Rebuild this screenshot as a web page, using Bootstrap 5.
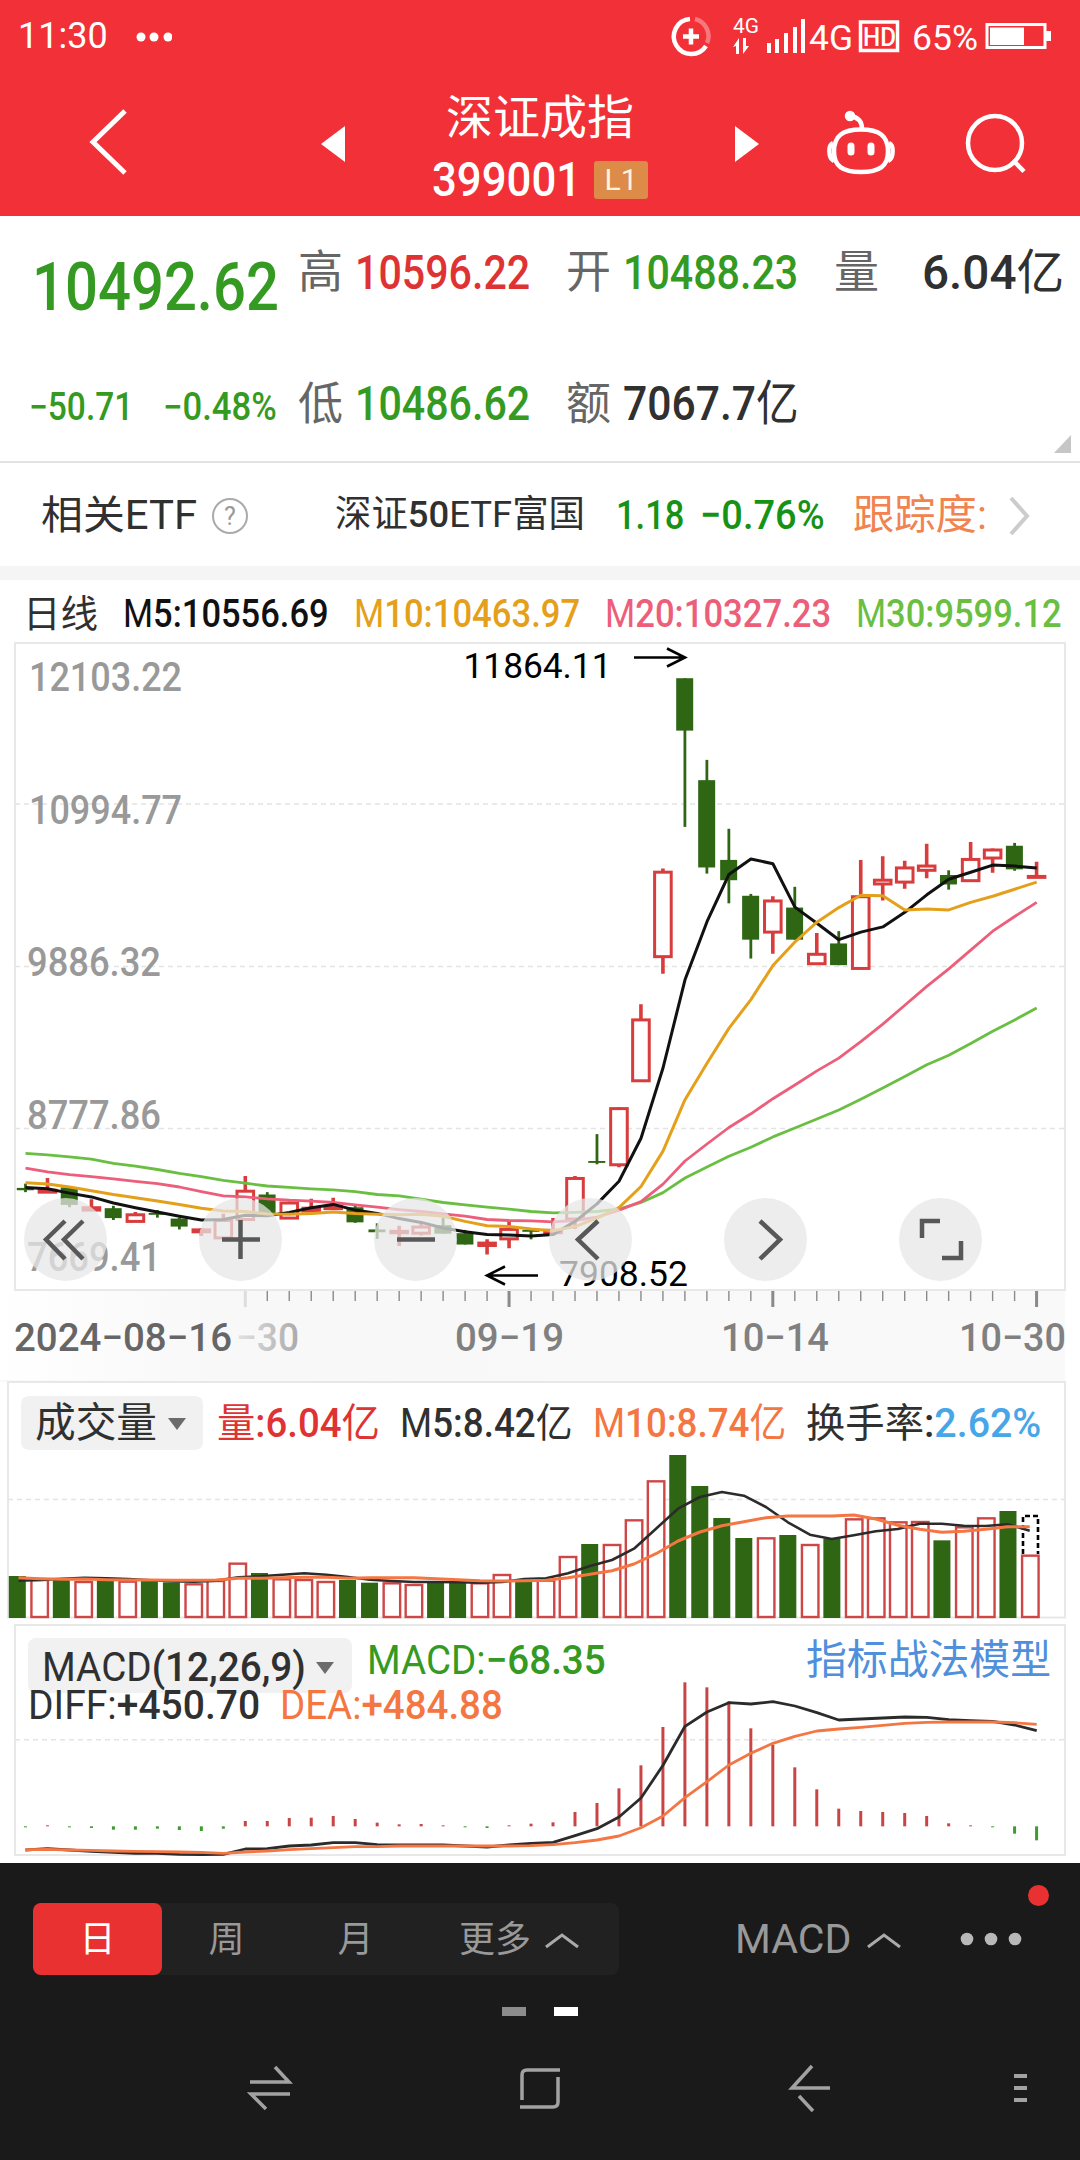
<!DOCTYPE html>
<html lang="zh-CN">
<head>
<meta charset="utf-8">
<meta name="viewport" content="width=1080">
<title>深证成指 399001</title>
<link href="https://cdn.jsdelivr.net/npm/bootstrap@5.3.0/dist/css/bootstrap.min.css" rel="stylesheet">
<style>
body{width:1080px;height:2160px;margin:0;overflow:hidden;background:#fff;color:#303030;font-family:Roboto,"Noto Sans CJK SC",sans-serif;line-height:1;font-size:41px}
svg{display:block}
.fit{display:block;flex:none;white-space:nowrap;line-height:1.2}
.fit>span{display:inline-block;transform-origin:0 50%;white-space:nowrap}
.dn{font-weight:500}
.gr{color:#349a22}.rd{color:#df3333}.lbl{color:#666}
.app-head{background:#f13037;height:216px;color:#fff}
.status{height:72px;padding:2px 29px 0 18px;font-size:36px}
.head-row{height:144px;display:grid;grid-template-columns:80px 230px 124px 290px 102px 138px 116px}
.head-row>*{align-self:start}
.title-zh{font-size:47px;line-height:46px;margin-top:23px;padding-left:12px}
.code-row{margin-top:17px;margin-left:-2px}
.lv{width:54px;height:38px;background:#dd8b48;border-radius:3px;font-size:30px;line-height:38px;color:#fff3df;margin-left:13px}
.quote{height:247px;border-bottom:2px solid #e2e2e2}
.q-row{display:grid;align-items:center;height:110px;font-size:48px;grid-template-columns:266px 57px 211px 57px 211px 88px 1fr;padding:2px 0 0 32px}
.q-row+.q-row{margin-top:22px}
.q-row .lbl{font-size:45px}
.big{font-size:66px;padding-top:30px}
.chg{font-size:38px;padding-top:8px;gap:30px;margin-left:-3px}
.corner{right:9px;bottom:8px}
.etf{height:103px;display:grid;align-items:center;grid-template-columns:170px 124px 281px 84px 153px 155px 1fr;padding:2px 0 0 41px}
.band{height:14px;background:#f5f5f5}
.ma{height:62px;padding:8px 18px 0 23px;font-size:38px}
.k-wrap{height:738px}
.k-tools{top:556px;left:24px;width:958px}
.k-btn{width:83px;height:83px;border:0;padding:0;border-radius:50%;background:rgba(231,231,231,.74)}
.k-btn svg{fill:none;stroke:#585858;stroke-width:4.500}
.sub{height:242px}
.sub2{height:241px}
.pill{background:#f1f1f1;border-radius:8px;height:54px}
.vol-head{top:15px;left:21px;right:0;height:56px;font-size:40px;display:grid;align-items:center;grid-template-columns:196px 183px 193px 213px 1fr}
.vol-head>.fit{padding-top:2px}
.macd-head{top:16px;left:28px;right:29px;font-size:40px}
.macd-head .fit{line-height:.9}
.tri{width:0;height:0;border:9px solid transparent;border-top:12px solid #6b6b6b;border-bottom:0}
.foot{height:297px;background:#1a1a1a;color:#999}
.tabs{height:72px;width:586px;background:#212121;border-radius:8px;margin:40px 0 0 33px;font-size:36px}
.tabs>div{width:129px;height:72px;padding-top:2px}
.tabs .on{background:#ea3132;color:#fff;border-radius:8px}
.tabs .more{width:199px;gap:13px}
.ind{margin:40px 0 0 116px;height:72px;gap:15px;font-size:40px;padding-top:2px}
.dots{margin:69px 0 0 58px}
.red-dot{width:21px;height:21px;background:#ea3132;right:31px;top:22px}
.pager{gap:28px;margin-top:32px}
.pager i{width:24px;height:9px;background:#8c8c8c}
.pager .now{background:#fff}
.soft{margin-top:46px}
svg text{font-family:Roboto,"Noto Sans CJK SC",sans-serif}
</style>
<script src="https://cdn.jsdelivr.net/npm/bootstrap@5.3.0/dist/js/bootstrap.bundle.min.js"></script>
</head>
<body>
<header class="app-head">
  <div class="status d-flex align-items-center justify-content-between">
    <div class="d-flex align-items-center">
      <span class="fit" data-w="90">11:30</span>
      <svg class="ms-4" width="40" height="12" fill="#fff"><circle cx="9" cy="6" r="4.5"/><circle cx="22" cy="6" r="4.5"/><circle cx="36" cy="6" r="4.5"/></svg>
    </div>
    <svg width="384" height="70" viewBox="667 2 384 70" fill="#fff">
      <g fill="none" stroke="#fff" stroke-width="4.500"><path d="M690 19A17.500 17.500 0 1 0 706 46"/><path d="M695 19A17.500 17.500 0 0 1 707 43" stroke-opacity=".35"/><path d="M683 36.500h16M691 28.500v16"/></g>
      <text x="733" y="33" font-size="20" textLength="26" lengthAdjust="spacingAndGlyphs">4G</text>
      <path d="M739 38v16h-3V46l-3 1zM743 38v16l6-8h-3v-8z"/>
      <path d="M767 43h4v10h-4zM775 39h4v14h-4zM784 33h4v20h-4zM793 27h4v26h-4zM801 19h4v34h-4z"/>
      <text x="809" y="50" font-size="35" textLength="44" lengthAdjust="spacingAndGlyphs">4G</text>
      <rect x="860.500" y="22" width="37" height="28.500" fill="none" stroke="#fff" stroke-width="3.500"/>
      <text x="863" y="45.500" font-size="26" font-weight="500" textLength="33" lengthAdjust="spacingAndGlyphs">HD</text>
      <text x="912" y="50" font-size="35" textLength="66" lengthAdjust="spacingAndGlyphs">65%</text>
      <rect x="987" y="24.500" width="58" height="23" fill="none" stroke="#fff" stroke-width="3"/><path d="M990 27.500h34v17.500h-34zM1046 31h5v10h-5z"/>
    </svg>
  </div>
  <div class="head-row">
    <span></span>
    <svg width="60" height="80" viewBox="80 100 60 80" style="margin-top:28px"><path d="M125 111L93 142L125 173" fill="none" stroke="#fff" stroke-width="5"/></svg>
    <svg width="60" height="60" viewBox="310 115 60 60" style="margin-top:43px"><path d="M345 126v36L321 144z" fill="#fff"/></svg>
    <div>
      <div class="title-zh">深证成指</div>
      <div class="code-row d-flex align-items-center">
        <span class="fit dn" data-w="149" style="font-size:49px;line-height:44px">399001</span>
        <span class="lv text-center"><span>L1</span></span>
      </div>
    </div>
    <svg width="60" height="60" viewBox="724 115 60 60" style="margin-top:43px"><path d="M735 126v36l24-18z" fill="#fff"/></svg>
    <svg width="80" height="80" viewBox="826 100 80 80" style="margin-top:28px" fill="none" stroke="#fff" stroke-width="4.500"><path d="M861 129.500c-18 0-27 6-27 22 0 15 9 20.500 27 20.500s27-5.500 27-20.500c0-16-9-22-27-22z"/><path d="M833 143c-5 2-5 15 1 18M889 143c5 2 5 15-1 18M862 129c0-8-4-12-12-13"/><circle cx="850" cy="116" r="3" fill="#fff"/><path d="M851 146v6M871 146v6" stroke-width="7" stroke-linecap="round"/></svg>
    <svg width="80" height="80" viewBox="964 100 80 80" style="margin-top:28px" fill="none" stroke="#fff" stroke-width="4.500"><circle cx="995" cy="143" r="27"/><path d="M1013 160l11 11.500"/></svg>
  </div>
</header>

<section class="quote position-relative">
  <div class="q-row">
    <span class="fit dn gr big" data-w="247">10492.62</span>
    <span class="lbl">高</span><span class="fit dn rd" data-w="175">10596.22</span>
    <span class="lbl">开</span><span class="fit dn gr" data-w="175">10488.23</span>
    <span class="lbl">量</span><span class="fit" data-w="142"><b class="dn">6.04</b>亿</span>
  </div>
  <div class="q-row">
    <div class="chg d-flex gr dn"><span class="fit" data-w="104">−50.71</span><span class="fit" data-w="114">−0.48%</span></div>
    <span class="lbl">低</span><span class="fit dn gr" data-w="175">10486.62</span>
    <span class="lbl">额</span><span class="fit" data-w="176"><b class="dn">7067.7</b>亿</span>
  </div>
  <svg class="corner position-absolute" width="17" height="18"><path d="M17 0v18H0z" fill="#c6c6c6"/></svg>
</section>

<section class="etf">
  <span class="fit" style="font-size:40px" data-w="156">相关ETF</span>
  <svg width="38" height="38"><circle cx="19" cy="19" r="17" fill="none" stroke="#aaa" stroke-width="2"/><text x="19" y="28" text-anchor="middle" font-size="25" fill="#999">?</text></svg>
  <span class="fit" style="font-size:37px" data-w="250">深证<b class="dn">50</b>ETF富国</span>
  <span class="fit dn" style="color:#169216" data-w="68">1.18</span>
  <span class="fit dn" style="color:#169216" data-w="125">−0.76%</span>
  <span class="fit" style="color:#f0834f" data-w="134">跟踪度:</span>
  <svg width="24" height="40" fill="none" stroke="#ccc" stroke-width="4"><path d="M3 2l16 18L3 38"/></svg>
</section>
<div class="band"></div>
<section class="ma d-flex align-items-center justify-content-between">
  <span class="fit" data-w="75">日线</span>
  <span class="fit" style="color:#111" data-w="206">M<b class="dn">5:10556.69</b></span>
  <span class="fit" style="color:#e4a01a" data-w="226">M<b class="dn">10:10463.97</b></span>
  <span class="fit" style="color:#ec5e79" data-w="226">M<b class="dn">20:10327.23</b></span>
  <span class="fit" style="color:#6abf43" data-w="206">M<b class="dn">30:9599.12</b></span>
</section>

<section class="k-wrap position-relative">
  <svg id="k" width="1080" height="738" viewBox="0 642 1080 738"></svg>
  <div class="k-tools position-absolute d-flex justify-content-between">
    <button class="k-btn"><svg width="83" height="83"><path d="M41 23L22 41.500L41 61M59 23L40 41.500L59 61"/></svg></button>
    <button class="k-btn"><svg width="83" height="83"><path d="M23 41.500h38M41.500 22v39"/></svg></button>
    <button class="k-btn"><svg width="83" height="83"><path d="M23 41.500h38"/></svg></button>
    <button class="k-btn"><svg width="83" height="83"><path d="M49 23L29 41.500L49 61"/></svg></button>
    <button class="k-btn"><svg width="83" height="83"><path d="M36 23L56 41.500L36 61"/></svg></button>
    <button class="k-btn"><svg width="83" height="83"><path d="M23 40V23h18M43 60h19V43"/></svg></button>
  </div>
</section>

<section class="sub position-relative">
  <svg id="v" width="1080" height="242" viewBox="0 1380 1080 242"></svg>
  <div class="vol-head position-absolute">
    <div class="pill d-flex align-items-center" style="width:182px;padding:2px 0 0 14px;gap:11px"><span class="fit" data-w="122" style="font-size:41px">成交量</span><i class="tri"></i></div>
    <span class="fit rd" data-w="163">量<b class="dn">:6.04</b>亿</span>
    <span class="fit" data-w="173">M<b class="dn">5:8.42</b>亿</span>
    <span class="fit" style="color:#f37643" data-w="193">M<b class="dn">10:8.74</b>亿</span>
    <span class="fit" data-w="235">换手率<b class="dn">:<span style="color:#47a6e8">2.62%</span></b></span>
  </div>
</section>

<section class="sub2 position-relative">
  <svg id="m" width="1080" height="241" viewBox="0 1622 1080 241"></svg>
  <div class="macd-head position-absolute">
    <div class="d-flex">
      <div class="pill d-flex align-items-center" style="width:324px;height:55px;padding:5px 0 0 14px;gap:10px"><span class="fit" data-w="264">MACD<b class="dn">(12,26,9)</b></span><i class="tri"></i></div>
      <span class="fit gr" style="margin-left:15px;margin-top:5px" data-w="239">MACD:<b class="dn">−68.35</b></span>
      <span class="fit ms-auto" style="color:#4f8fdc;font-size:41px;margin-top:4px" data-w="245">指标战法模型</span>
    </div>
    <div class="d-flex" style="gap:20px;margin-top:-5px"><span class="fit" data-w="232">DIFF:<b class="dn">+450.70</b></span><span class="fit" style="color:#f37643" data-w="223">DEA:<b class="dn">+484.88</b></span></div>
  </div>
</section>

<footer class="foot position-relative">
  <div class="d-flex align-items-start">
    <div class="tabs d-flex">
      <div class="on d-flex align-items-center justify-content-center">日</div>
      <div class="d-flex align-items-center justify-content-center">周</div>
      <div class="d-flex align-items-center justify-content-center">月</div>
      <div class="more d-flex align-items-center justify-content-center"><span>更多</span><svg width="36" height="18" fill="none" stroke="#aaa" stroke-width="3"><path d="M2 16L18 4l16 12"/></svg></div>
    </div>
    <div class="ind d-flex align-items-center"><span class="fit" data-w="116">MACD</span><svg width="36" height="18" fill="none" stroke="#aaa" stroke-width="3"><path d="M2 16L18 4l16 12"/></svg></div>
    <svg class="dots" width="64" height="14" fill="#b8b8b8"><circle cx="7" cy="7" r="6.300"/><circle cx="31" cy="7" r="6.300"/><circle cx="55" cy="7" r="6.300"/></svg>
  </div>
  <span class="red-dot rounded-circle position-absolute"></span>
  <div class="pager d-flex justify-content-center"><i></i><i class="now"></i></div>
  <svg class="soft" width="1080" height="52" viewBox="0 2062 1080 52" fill="none" stroke="#a2a2a2" stroke-width="3.500">
    <path d="M250 2082h39L275 2067M290 2094h-39l15 15"/>
    <path d="M522 2100v-25q0-5 5-5h33M558 2077v25q0 5-5 5h-33"/>
    <path d="M812 2066l-20 22h38M799 2096l14 15"/>
    <path d="M1014 2076h13M1014 2088h13M1014 2100h13" stroke-width="4"/>
  </svg>
</footer>

<script>
const RED='#d83c3c', GREEN='#2f6614', N=47;
const line=(d,x0,fy,c,w)=>`<polyline fill="none" stroke="${c}" stroke-width="${w}" stroke-linejoin="round" points="${d.map((v,i)=>(x0+22*i*.9992).toFixed(1)+','+fy(v).toFixed(1)).join(' ')}"/>`;
const txt=(s,x,y,w,size,c,wt=500)=>`<text x="${x}" y="${y}" font-size="${size}" font-weight="${wt}" fill="${c}" textLength="${w}" lengthAdjust="spacingAndGlyphs">${s}</text>`;
const dash=(x1,y)=>`<path d="M${x1} ${y}H1065" stroke="#e4e4e4" stroke-width="1.500" stroke-dasharray="5 4"/>`;

/* daily candles: direction, high, body top, body bottom, low */
const K=[['g',1152,1161,1166,1170],['r',1140,1166,1170,1170],['g',1158,1160,1197,1202],['r',1185,1203,1208,1209],['g',1199,1204,1225,1229],['r',1212,1218,1232,1233],['g',1208,1214,1218,1224],['g',1224,1226,1243,1249],['r',1246,1250,1254,1263],['r',1216,1230,1267,1268],['r',1136,1168,1228,1230],['g',1170,1175,1214,1216],['r',1190,1193,1225,1226],['r',1184,1204,1210,1211],['r',1182,1200,1205,1208],['g',1199,1202,1234,1235],['g',1236,1249,1255,1269],['r',1241,1253,1256,1284],['r',1237,1244,1257,1262],['g',1224,1240,1258,1258],['g',1250,1257,1281,1281],['r',1270,1278,1283,1302],['r',1230,1249,1269,1289],['g',1248,1250,1254,1270],['r',1225,1251,1256,1258],['r',1136,1141,1227,1248],['g',1047,1104,1108,1111],['r',990,993,1112,1117],['r',772,805,934,936],['r',484,492,671,707],['g',81,81,192,396],['g',254,297,482,495],['g',400,466,509,558],['g',538,542,635,675],['r',543,553,619,665],['g',523,567,635,635],['r',621,666,686,687],['g',617,643,689,689],['r',466,544,696,697],['r',458,509,517,552],['r',468,483,513,527],['r',432,479,488,505],['g',488,498,518,529],['r',428,465,510,512],['r',442,445,462,493],['g',430,436,486,489],['r',470,501,503,504]];
const M5=[1160,1163,1172,1180,1193,1203,1212,1221,1229,1228,1219,1220,1213,1203,1196,1208,1215,1226,1234,1246,1254,1260,1261,1263,1260,1232,1195,1147,1056,907,720,597,497,464,474,566,600,635,619,608,577,540,507,492,477,479,483];
const M10=[1150,1153,1159,1167,1175,1182,1189,1196,1204,1210,1211,1216,1217,1215,1212,1215,1217,1218,1217,1221,1232,1241,1243,1248,1252,1243,1225,1203,1158,1083,974,897,823,762,690,640,598,567,541,542,572,570,572,556,543,528,513];
const M20=[1119,1127,1133,1137,1142,1147,1152,1159,1169,1178,1180,1184,1187,1189,1192,1197,1202,1207,1211,1216,1221,1228,1230,1231,1233,1230,1223,1208,1190,1153,1104,1068,1033,1004,972,943,913,886,851,814,774,734,697,657,617,586,556];
const M30=[1088,1091,1095,1100,1109,1115,1122,1130,1137,1145,1151,1157,1160,1163,1165,1169,1175,1178,1185,1192,1197,1202,1206,1211,1214,1213,1211,1206,1192,1171,1140,1117,1094,1075,1053,1034,1015,996,973,949,925,900,880,855,829,805,780];
const ky=v=>640+v/2.119, kx=i=>25.5+21.98*i;
let s=`<defs><linearGradient id="gb"><stop offset="0" stop-color="#fff"/><stop offset=".2" stop-color="#f8f8f8"/><stop offset="1" stop-color="#f9f9f9"/></linearGradient><linearGradient id="gd" gradientUnits="userSpaceOnUse" x1="237" x2="300"><stop offset="0" stop-color="#e2e2e2"/><stop offset="1" stop-color="#a9a9a9"/></linearGradient></defs>`;
s+=`<path d="M0 1291H1065V1380H0z" fill="url(#gb)"/><rect x="15" y="643" width="1050" height="647" fill="#fff" stroke="#e8e8e8" stroke-width="2"/>`;
s+=dash(15,804)+dash(15,966.5)+dash(15,1128.5);
[['12103.22',29,690.5,153],['10994.77',29,823.5,153],['9886.32',27,976,134],['8777.86',27,1128.5,134],['7669.41',27,1270.5,134]].forEach(a=>s+=txt(a[0],a[1],a[2],a[3],41,'#999'));
K.forEach((k,i)=>{const x=kx(i),[c,h,t,b,l]=k,T=ky(t),B=ky(b);
 if(c=='g')s+=`<path d="M${x} ${ky(h)}V${ky(l)}" stroke="${GREEN}" stroke-width="2.800"/><rect x="${x-8.7}" y="${T}" width="17" height="${B-T}" fill="${GREEN}"/>`;
 else s+=`<path d="M${x} ${ky(h)}V${T}M${x} ${B}V${ky(l)}" stroke="${RED}" stroke-width="3.600"/><rect x="${x-8.3}" y="${T}" width="16.600" height="${B-T}" fill="#fff" stroke="${RED}" stroke-width="3"/>`;});
s+=line(M30,25.5,ky,'#6abf43',2.8)+line(M20,25.5,ky,'#ec5e79',2.8)+line(M5,25.5,ky,'#111',3)+line(M10,25.5,ky,'#e4a01a',3);
s+=txt('11864.11',463.5,678,148,35,'#000',400)+txt('7908.52',559,1285.500,129,35,'#000',400);
s+=`<path d="M634 657.500H684M667 648.500l18 9-18 9M538 1275.500H487M505 1266.500l-18 9 18 9" fill="none" stroke="#000" stroke-width="2.600"/>`;
for(let i=10;i<N;i++){const M=(i-10)%12==0;s+=`<path d="M${kx(i)} 1291v${M?16:10}" stroke="${i==10?'#ddd':'#8a8a8a'}" stroke-width="${M?3:1.4}"/>`;}
s+=txt('2024−08−16',14,1351,218,39,'#666')+txt('−30',236,1351,63,39,'url(#gd)');
s+=txt('09−19',455,1351,109,39,'#808080')+txt('10−14',721,1351,108,39,'#808080')+txt('10−30',959,1351,107,39,'#808080');
document.getElementById('k').innerHTML=s;

/* volume */
const V='g648 r660 g658 r666 g660 r665 g662 g667 r673 r663 r611 g639 r658 r660 r666 g660 g668 r670 r675 g666 g667 r670 r645 g664 r662 r591 g552 r555 r481 r364 g285 g378 g474 g534 r535 g525 r555 g537 r478 r475 r487 r486 g541 r502 r475 g453 r587'.split(' ');
const V5=[662,660,656,653,655,657,661,664,665,662,652,649,644,640,644,651,659,663,666,666,667,668,666,657,655,640,618,600,566,506,446,411,396,407,441,487,524,537,526,514,507,491,491,497,498,493,512];
const V10=[653,656,658,657,659,660,660,661,661,660,655,655,653,652,652,655,653,653,653,656,659,662,663,662,661,653,643,632,612,581,543,516,497,485,473,468,468,468,465,477,496,508,517,514,508,500,500];
const vy=v=>1360+v/3;
s=`<path d="M0 1380H1065V1382H0z" fill="#f9f9f9"/><rect x="8" y="1382" width="1057" height="235.500" fill="#fff" stroke="#e8e8e8" stroke-width="2"/>`+dash(8,1499.5);
V.forEach((d,i)=>{const x=17.4+22.015*i,y=vy(+d.slice(1));
 s+=d[0]=='g'?`<rect x="${x-8.6}" y="${y}" width="17" height="${1618-y}" fill="${GREEN}"/>`:`<rect x="${x-8}" y="${y}" width="16.500" height="${1617-y}" fill="#fff" stroke="#cf4646" stroke-width="2.400"/>`;});
s+=`<path d="M1023 1554V1516H1038V1554" fill="none" stroke="#000" stroke-width="2.600" stroke-dasharray="5 3"/>`;
s+=line(V5,18.5,vy,'#2b2b2b',2.6)+line(V10,18.5,vy,'#f37643',3);
document.getElementById('v').innerHTML=s;

/* MACD histogram */
const H=[1402,1396,1402,1404,1409,1409,1406,1410,1413,1406,1383,1383,1374,1373,1368,1377,1388,1393,1392,1396,1402,1404,1396,1391,1387,1356,1329,1285,1216,1101,967,982,1024,1105,1154,1222,1288,1346,1353,1356,1359,1368,1390,1396,1402,1421,1441];
const DIFF=[1470,1466,1470,1474,1477,1480,1480,1483,1484,1483,1467,1466,1458,1455,1448,1448,1454,1455,1455,1455,1458,1461,1455,1450,1447,1427,1406,1371,1314,1216,1099,1056,1028,1032,1025,1038,1058,1080,1077,1074,1071,1072,1079,1082,1084,1095,1112];
const DEA=[1469,1468,1470,1471,1473,1474,1475,1476,1477,1480,1476,1473,1469,1466,1463,1460,1460,1458,1458,1458,1458,1458,1458,1457,1454,1448,1440,1428,1403,1368,1313,1265,1215,1180,1150,1129,1113,1107,1102,1096,1090,1087,1086,1086,1086,1088,1093];
s=`<rect x="15" y="1625" width="1050" height="230" fill="#fff" stroke="#e8e8e8" stroke-width="2"/>`+dash(15,1739.7);
H.forEach((h,i)=>s+=`<path d="M${kx(i)} ${vy(1399)}V${vy(h)}" stroke="${h>1399?'#3f9a30':'#c94444'}" stroke-width="3"/>`);
s+=line(DIFF,25.5,vy,'#2b2b2b',2.8)+line(DEA,25.5,vy,'#f37643',2.8);
document.getElementById('m').innerHTML=s;

/* narrow each numeric label to its column width */
document.querySelectorAll('.fit').forEach(e=>{
  const w=+e.dataset.w, n=document.createElement('span');
  n.append(...e.childNodes);e.append(n);e.style.width='max-content';
  const r=w/n.offsetWidth;e.style.width=w+'px';n.style.transform=`scaleX(${r})`;
});
</script>
</body>
</html>
